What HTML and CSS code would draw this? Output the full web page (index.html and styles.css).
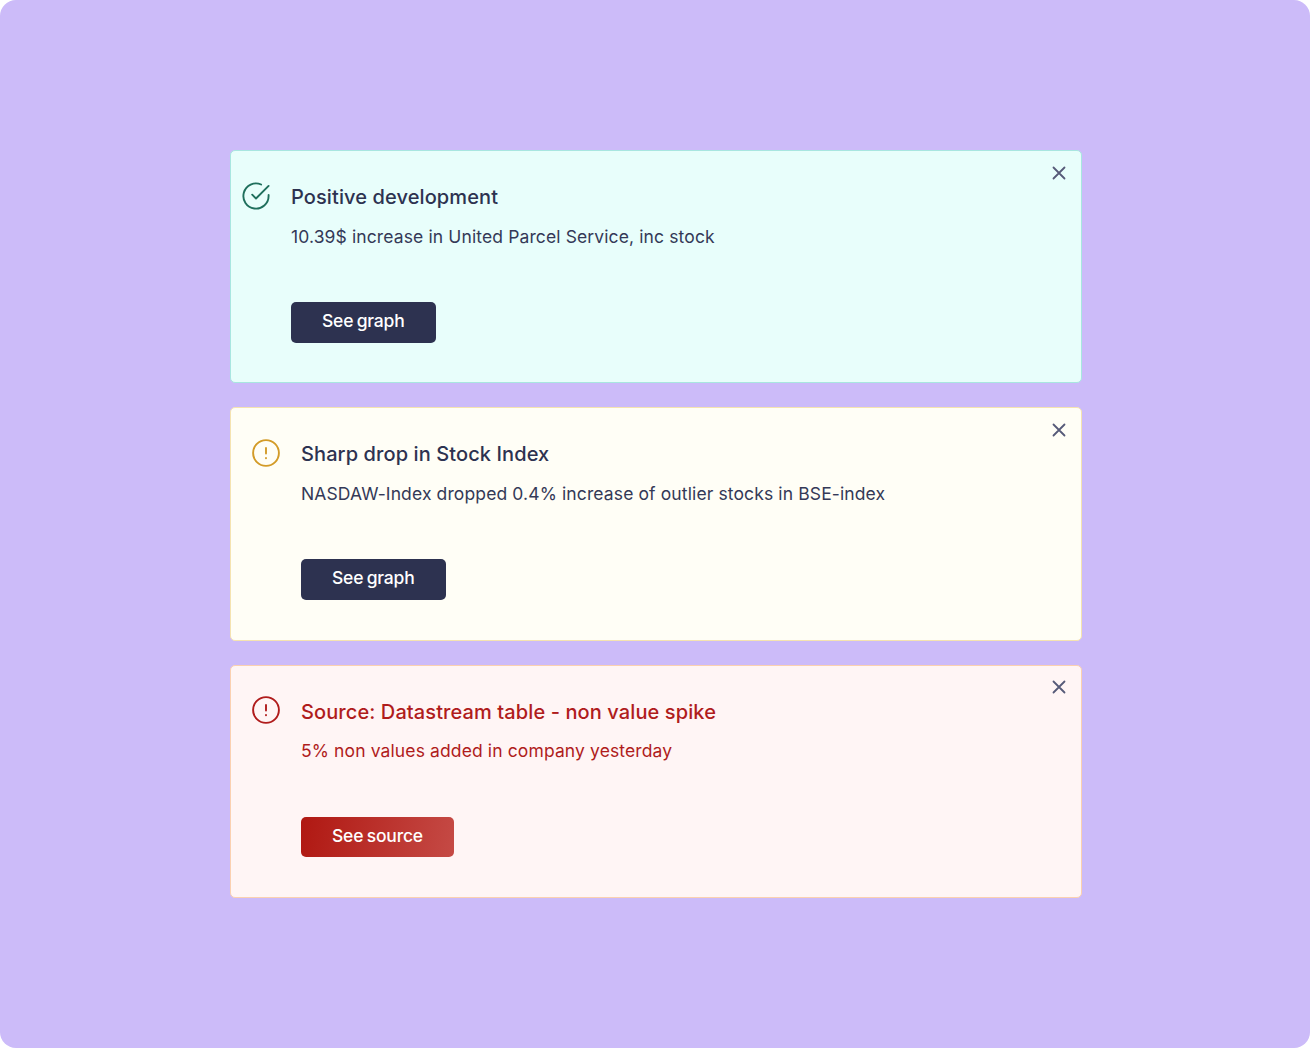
FILE: index.html

```html
<!DOCTYPE html>
<html lang="en">
<head>
    <meta charset="UTF-8">
    <meta name="viewport" content="width=device-width, initial-scale=1.0">
    <title>Alerts</title>
    <link rel="stylesheet" href="styles.css">
</head>
<body>
    <div class="panel">
        <div class="alert-list">
            <div class="alert alert-success">
                <svg class="alert-icon" viewBox="0 0 28 28" fill="none" stroke="#1f6f5c" stroke-width="1.9" stroke-linecap="round" stroke-linejoin="round">
                    <path d="M26.6 12.9V14a12.6 12.6 0 1 1-7.5-11.5"/>
                    <path d="M26.6 3.9 14 16.5l-3.8-3.8"/>
                </svg>
                <div class="alert-body">
                    <h2 class="alert-title">Positive development</h2>
                    <p class="alert-text">10.39$ increase in United Parcel Service, inc stock</p>
                    <a href="#" class="alert-btn">See graph</a>
                </div>
                <svg class="alert-close" viewBox="0 0 14 14" fill="none" stroke="#565a78" stroke-width="1.8" stroke-linecap="round">
                    <path d="M1.5 1.5l11 11M12.5 1.5l-11 11"/>
                </svg>
            </div>

            <div class="alert alert-warning">
                <svg class="alert-icon" viewBox="0 0 28 28" fill="none" stroke="#d39b28" stroke-width="1.9" stroke-linecap="round">
                    <circle cx="14" cy="14" r="12.9"/>
                    <path d="M14 9v5.5M14 19v.2"/>
                </svg>
                <div class="alert-body">
                    <h2 class="alert-title">Sharp drop in Stock Index</h2>
                    <p class="alert-text">NASDAW-Index dropped 0.4% increase of outlier stocks in BSE-index</p>
                    <a href="#" class="alert-btn">See graph</a>
                </div>
                <svg class="alert-close" viewBox="0 0 14 14" fill="none" stroke="#565a78" stroke-width="1.8" stroke-linecap="round">
                    <path d="M1.5 1.5l11 11M12.5 1.5l-11 11"/>
                </svg>
            </div>

            <div class="alert alert-error">
                <svg class="alert-icon" viewBox="0 0 28 28" fill="none" stroke="#b01c1c" stroke-width="1.9" stroke-linecap="round">
                    <circle cx="14" cy="14" r="12.9"/>
                    <path d="M14 9v5.5M14 19v.2"/>
                </svg>
                <div class="alert-body">
                    <h2 class="alert-title">Source: Datastream table - non value spike</h2>
                    <p class="alert-text">5% non values added in company yesterday</p>
                    <a href="#" class="alert-btn">See source</a>
                </div>
                <svg class="alert-close" viewBox="0 0 14 14" fill="none" stroke="#565a78" stroke-width="1.8" stroke-linecap="round">
                    <path d="M1.5 1.5l11 11M12.5 1.5l-11 11"/>
                </svg>
            </div>
        </div>
    </div>
</body>
</html>
```

FILE: styles.css

```css
body {
    margin: 0;
    background: #ffffff;
    font-family: Inter, "Noto Sans", sans-serif;
}

.panel {
    height: 1048px;
    background: #ccbbf9;
    border-radius: 16px;
    display: flex;
    justify-content: center;
    padding: 150px 228px 0 230px;
    box-sizing: border-box;
}

.alert-list {
    width: 852px;
    display: flex;
    flex-direction: column;
    gap: 24px;
}

.alert {
    display: flex;
    align-items: flex-start;
    height: 233.3px;
    box-sizing: border-box;
    padding: 30.8px 15px 0 21px;
    border: 1px solid;
    border-radius: 5px;
}

.alert-success {
    padding-left: 11px;
    background: #e8fefb;
    border-color: #a8e6e0;
}

.alert-warning {
    background: #fffef6;
    border-color: #f5e3b0;
}

.alert-error {
    background: #fff5f5;
    border-color: #fbd0b0;
}

.alert-icon {
    width: 28px;
    height: 28px;
    flex-shrink: 0;
    margin-right: 21px;
}

.alert-body {
    flex: 1;
}

.alert-title {
    margin: 1.3px 0 0;
    font-size: 20px;
    line-height: 28px;
    font-weight: 550;
    letter-spacing: 0.1px;
    color: #2d3250;
}

.alert-text {
    margin: 11.5px 0 0;
    font-size: 17.5px;
    line-height: 28px;
    font-weight: 400;
    letter-spacing: 0.12px;
    color: #343957;
}

.alert-btn {
    display: inline-block;
    margin-top: 51.5px;
    padding: 0 31px;
    height: 40.5px;
    line-height: 38px;
    border-radius: 5px;
    background: #2d3250;
    color: #ffffff;
    font-size: 17.5px;
    font-weight: 500;
    letter-spacing: -0.2px;
    word-spacing: -1px;
    text-decoration: none;
}

.alert-error .alert-title,
.alert-error .alert-text {
    color: #b01c1c;
}

.alert-error .alert-btn {
    background: linear-gradient(100deg, #b01812 0%, #c54a45 100%);
}

.alert-close {
    width: 14px;
    height: 14px;
    flex-shrink: 0;
    margin-top: -16px;
}
```
